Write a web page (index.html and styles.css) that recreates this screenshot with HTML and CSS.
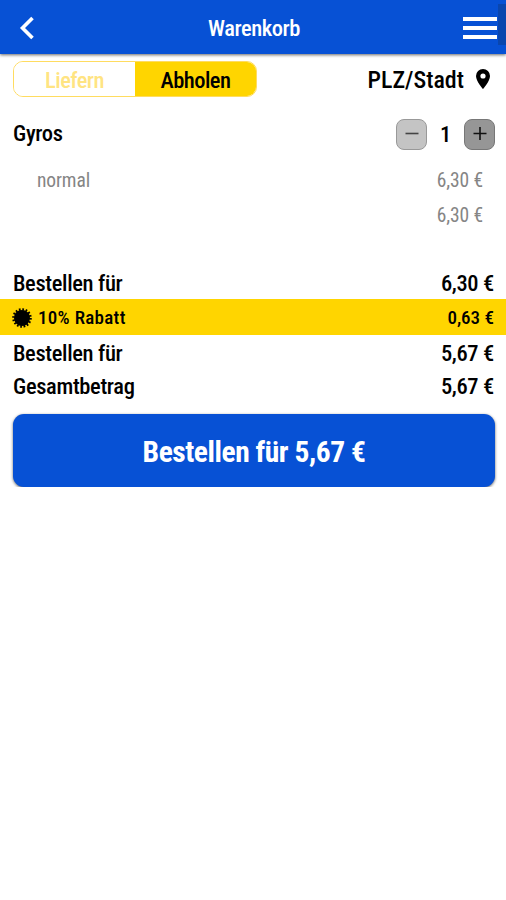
FILE: index.html
```html
<!DOCTYPE html>
<html lang="de">
<head>
    <meta charset="UTF-8">
    <title>Warenkorb</title>
    <link rel="stylesheet" href="styles.css">
</head>
<body>
    <header class="header">
        <svg class="back" width="16" height="24" viewBox="0 0 16 24"><path d="M13.500 2 3.500 12l10 10" fill="none" stroke="#fff" stroke-width="3.600"/></svg>
        <h1 class="title">Warenkorb</h1>
        <div class="menu"><span></span><span></span><span></span></div>
        <div class="scrollbar"></div>
    </header>

    <main>
        <div class="options">
            <div class="toggle">
                <button class="toggle-btn">Liefern</button>
                <button class="toggle-btn active">Abholen</button>
            </div>
            <div class="location">
                <span>PLZ/Stadt</span>
                <svg width="14" height="20" viewBox="0 0 14 20"><path d="M7 0a7 7 0 0 0-7 7c0 5.200 7 13 7 13s7-7.800 7-13a7 7 0 0 0-7-7zm0 9.600a2.600 2.600 0 1 1 0-5.200 2.600 2.600 0 0 1 0 5.200z"/></svg>
            </div>
        </div>

        <div class="item">
            <span class="item-name">Gyros</span>
            <div class="quantity">
                <button class="qty-btn minus"><svg width="14" height="14" viewBox="0 0 14 14"><path d="M.5 6.500h13" stroke="#444" stroke-width="1.600"/></svg></button>
                <span class="qty">1</span>
                <button class="qty-btn plus"><svg width="14" height="14" viewBox="0 0 14 14"><path d="M.5 6.500h13M7 0v13" stroke="#111" stroke-width="1.600"/></svg></button>
            </div>
        </div>
        <div class="detail"><span>normal</span><span>6,30 €</span></div>
        <div class="detail"><span></span><span>6,30 €</span></div>

        <div class="sums">
            <div class="sum"><span>Bestellen für</span><span>6,30 €</span></div>
            <div class="discount">
                <svg width="20" height="20" viewBox="-10 -10 20 20"><circle r="8"/><circle r="8.500" fill="none" stroke="#000" stroke-width="2.600" stroke-dasharray="1.670 1.670"/></svg>
                <span class="discount-name">10% Rabatt</span>
                <span>0,63 €</span>
            </div>
            <div class="sum"><span>Bestellen für</span><span>5,67 €</span></div>
            <div class="sum total"><span>Gesamtbetrag</span><span>5,67 €</span></div>
        </div>

        <button class="order-btn">Bestellen für 5,67 €</button>
    </main>
</body>
</html>
```
FILE: styles.css
```css
* {
    box-sizing: border-box;
}

body {
    margin: 0;
    background: #fff;
    color: #000;
    font-family: 'Roboto Condensed', Roboto, sans-serif;
    font-stretch: 75%;
    font-size: 22.5px;
    font-weight: 500;
    letter-spacing: -0.35px;
}

button {
    font: inherit;
    font-stretch: 75%;
    letter-spacing: inherit;
    padding: 0;
    border: none;
}

svg {
    display: block;
}

.header {
    position: relative;
    display: flex;
    align-items: center;
    justify-content: space-between;
    height: 54px;
    padding: 2px 9px 0 19px;
    background: #0751d5;
    color: #fff;
    box-shadow: 0 1px 3px rgba(0, 0, 0, 0.6);
}

.title {
    margin: 0 0 0 10px;
    font-size: 22.5px;
    font-weight: 500;
    letter-spacing: -0.45px;
}

.menu {
    display: flex;
    flex-direction: column;
    gap: 5px;
    width: 34px;
}

.menu span {
    height: 4px;
    background: #fff;
}

.scrollbar {
    position: absolute;
    top: 4px;
    right: 0;
    width: 8px;
    height: 41px;
    background: #0a46ae;
}

.options {
    display: flex;
    align-items: center;
    justify-content: space-between;
    padding: 7px 16px 0 13px;
}

.toggle {
    display: flex;
    width: 244px;
    height: 36px;
    border: 1px solid #ffdc60;
    border-radius: 10px;
    overflow: hidden;
}

.toggle-btn {
    flex: 1;
    padding-top: 2px;
    background: #fff;
    color: #ffe482;
    letter-spacing: -0.55px;
}

.toggle-btn.active {
    background: #ffd500;
    color: #000;
}

.location {
    display: flex;
    align-items: center;
    gap: 12px;
    padding-top: 1px;
    font-size: 24px;
    letter-spacing: 0;
}

.location svg {
    margin-top: -2px;
}

.item {
    display: flex;
    align-items: center;
    justify-content: space-between;
    height: 32px;
    margin-top: 21px;
    padding: 0 11px 0 13px;
}

.item-name {
    padding-bottom: 2px;
}

.quantity {
    display: flex;
    align-items: center;
}

.qty {
    width: 37px;
    text-align: center;
}

.qty-btn {
    display: flex;
    align-items: center;
    justify-content: center;
    width: 31px;
    height: 31px;
    border: 1px solid #999;
    border-radius: 8px;
    background: #c4c4c4;
}

.qty-btn.plus {
    border-color: #777;
    background: #969696;
}

.detail {
    display: flex;
    align-items: center;
    justify-content: space-between;
    height: 35px;
    padding: 0 23px 0 37px;
    color: #858585;
    font-size: 19.5px;
    font-weight: 400;
    letter-spacing: -0.1px;
}

.item + .detail {
    margin-top: 13px;
}

.sums {
    margin-top: 33px;
}

.sum {
    display: flex;
    align-items: center;
    justify-content: space-between;
    height: 33px;
    padding: 0 12px 0 13px;
}

.discount {
    display: flex;
    align-items: center;
    height: 36px;
    margin-bottom: 1px;
    padding: 1px 12px 0;
    background: #ffd500;
    font-size: 19px;
    letter-spacing: 0;
}

.discount-name {
    flex: 1;
    margin-left: 6px;
    letter-spacing: 0.3px;
}

.order-btn {
    display: block;
    width: 482px;
    height: 73px;
    margin: 12px auto 0 13px;
    padding-top: 2px;
    border-radius: 11px;
    background: #0751d5;
    color: #fff;
    font-size: 29.5px;
    font-weight: 700;
    letter-spacing: -0.45px;
    box-shadow: 0 1px 3px rgba(0, 0, 0, 0.6);
}
```
